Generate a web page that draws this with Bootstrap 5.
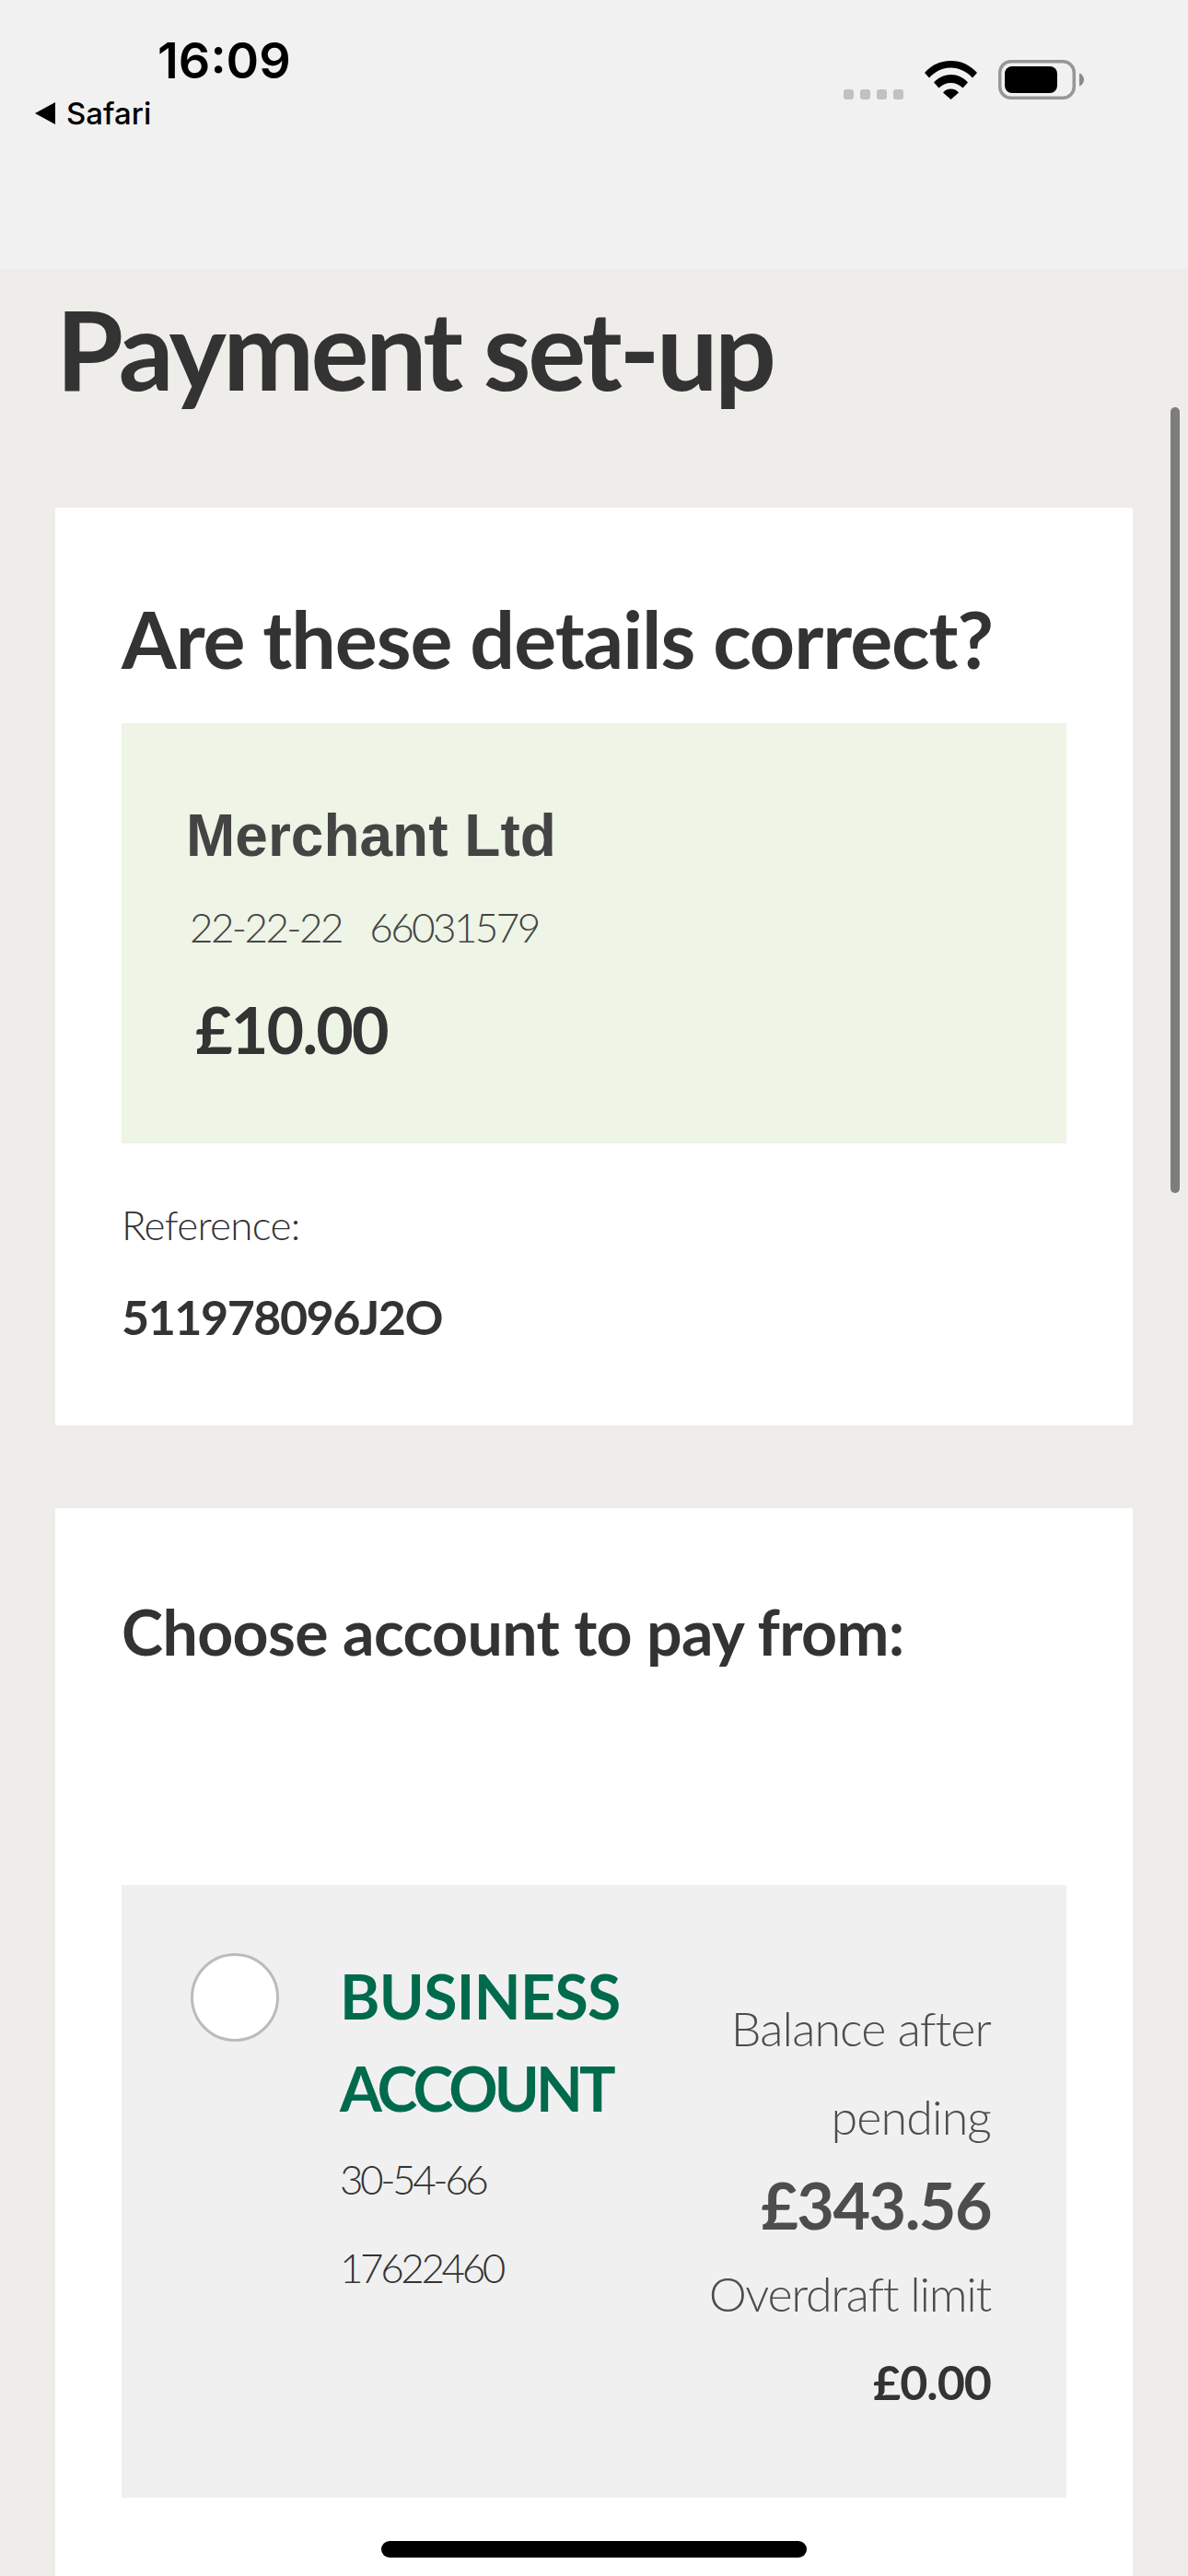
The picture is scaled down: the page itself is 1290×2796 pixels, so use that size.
<!DOCTYPE html>
<html lang="en">
<head>
    <meta charset="UTF-8">
    <meta name="viewport" content="width=device-width, initial-scale=1.0">
    <title>Payment set-up</title>
    <link href="https://cdn.jsdelivr.net/npm/bootstrap@5.3.2/dist/css/bootstrap.min.css" rel="stylesheet">
    <style>
        html, body { height: 100%; }
        body { background: #eeede9; color: #333; font-family: "Lato", "Liberation Sans", sans-serif; overflow: hidden; }
        .phone { position: relative; height: 2796px; overflow: hidden; }

        /* status bar */
        .status-bar { height: 292px; background: #f1f1f1; padding: 31px 113px 0 38px; font-family: "Inter", "Liberation Sans", sans-serif; color: #000; }
        .clock { font-size: 54px; font-weight: 600; line-height: 70px; margin-left: 133px; }
        .back-app { font-size: 33px; line-height: 40px; font-weight: 500; display: flex; align-items: center; gap: 12px; margin-top: 2px; }
        .back-arrow { width: 0; height: 0; border-top: 12px solid transparent; border-bottom: 12px solid transparent; border-right: 22px solid #000; }
        .status-icons { padding-top: 34px; gap: 23px; }

        /* page */
        .page-title { font-size: 118px; font-weight: 700; line-height: 130px; letter-spacing: -3.5px; margin: 0; padding: 22px 0 0 61px; height: 259px; color: #333; }
        .panel { background: #fff; margin: 0 60px; padding: 0 72px; }
        .panel-details { height: 996px; margin-bottom: 90px; padding-top: 92px; }
        .panel-accounts { height: 1200px; padding-top: 94px; }
        .panel-heading { font-size: 86px; font-weight: 700; line-height: 100px; letter-spacing: -1px; margin: 0 0 42px; color: #333; }
        .payee-box { background: #eef4e6; height: 456px; padding: 84px 70px 0; }
        .payee-name { font-family: "Liberation Sans", Arial, sans-serif; font-weight: 700; font-size: 64px; line-height: 76px; color: #444; }
        .payee-nums { font-size: 44px; font-weight: 300; line-height: 60px; margin: 31px 0 0 4px; color: #444; word-spacing: 21px; letter-spacing: -2.6px; }
        .payee-amount { font-size: 70px; font-weight: 700; line-height: 80px; margin: 41px 0 0 10px; letter-spacing: -1.8px; color: #333; }
        .ref-label { font-size: 44px; font-weight: 300; line-height: 60px; margin-top: 58px; letter-spacing: -.7px; }
        .ref-value { font-size: 52px; font-weight: 700; line-height: 60px; margin-top: 40px; letter-spacing: -1.5px; }
        .choose-heading { font-size: 68px; font-weight: 700; line-height: 80px; letter-spacing: -.6px; margin: 0 0 235px; color: #333; }

        /* account option */
        .account-box { background: #f0f0f0; height: 665px; padding: 74px 82px 0 75px; }
        .radio-dot { width: 96px; height: 96px; border-radius: 50%; background: #fff; border: 3px solid #bbb; flex-shrink: 0; margin-right: 66px; }
        .account-name { font-size: 66px; font-weight: 700; line-height: 100px; color: #006a4d; margin-top: -3px; }
        .account-name span { display: block; letter-spacing: -.6px; }
        .account-name span + span { letter-spacing: -3.8px; }
        .account-num { font-size: 44px; font-weight: 300; line-height: 96px; letter-spacing: -3.4px; color: #333; }
        .balance-col { text-align: right; margin-top: 33px; width: 340px; flex-shrink: 0; }
        .bal-label { font-size: 52px; font-weight: 300; line-height: 96px; letter-spacing: -.9px; color: #4d4d4d; }
        .bal-label + .bal-big + .bal-label { letter-spacing: -1.3px; }
        .bal-big { font-size: 70px; font-weight: 700; line-height: 96px; letter-spacing: -1.5px; color: #4d4d4d; }
        .bal-small { font-size: 52px; font-weight: 700; line-height: 96px; letter-spacing: -1px; color: #333; }

        /* overlays */
        .scroll-thumb { position: absolute; left: 1271px; top: 442px; width: 10px; height: 853px; border-radius: 5px; background: #7d7d7d; }
        .home-bar { position: absolute; left: 414px; top: 2758px; width: 462px; height: 18px; border-radius: 9px; background: #000; }
    </style>
</head>
<body>
    <div class="phone">
        <!-- Status bar -->
        <div class="status-bar d-flex justify-content-between align-items-start">
            <div>
                <div class="clock">16:09</div>
                <div class="back-app"><span class="back-arrow"></span>Safari</div>
            </div>
            <div class="status-icons d-flex align-items-end">
                <svg width="65" height="11" viewBox="0 0 65 11"><g fill="#c1c1c1"><rect x="0" y="0" width="11" height="11" rx="3"/><rect x="18" y="0" width="11" height="11" rx="3"/><rect x="36" y="0" width="11" height="11" rx="3"/><rect x="54" y="0" width="11" height="11" rx="3"/></g></svg>
                <svg width="57" height="42" viewBox="0 0 57 42"><path fill="#000" d="M28.5 0C17.5 0 7.500 4.500 0 13l5 5.500C11.500 11.500 19.500 7.500 28.500 7.500S45.500 11.500 52 18.500L57 13C49.500 4.500 39.500 0 28.500 0zM10 23.500l5.500 6c3.500-3.500 8-5.500 13-5.500s9.500 2 13 5.500l5.500-6c-5-5.500-11-8.500-18.500-8.500S15 18 10 23.500zM20 34.500L28.500 42 37 34.500c-2-2.500-5-4-8.500-4s-6.500 1.500-8.500 4z"/></svg>
                <svg width="93" height="43" viewBox="0 0 93 43"><rect x="1.750" y="1.750" width="80.500" height="39.500" rx="12" fill="none" stroke="#979797" stroke-width="3.500"/><rect x="7" y="7" width="57" height="29" rx="8" fill="#000"/><path fill="#8a8a8a" d="M88 14.500c3 1 5 4 5 7s-2 6-5 7z"/></svg>
            </div>
        </div>

        <h1 class="page-title">Payment set-up</h1>

        <!-- Payment details -->
        <div class="panel panel-details">
            <h2 class="panel-heading">Are these details correct?</h2>
            <div class="payee-box">
                <div class="payee-name">Merchant Ltd</div>
                <div class="payee-nums">22-22-22 66031579</div>
                <div class="payee-amount">£10.00</div>
            </div>
            <div class="ref-label">Reference:</div>
            <div class="ref-value">511978096J2O</div>
        </div>

        <!-- Account choice -->
        <div class="panel panel-accounts">
            <h3 class="choose-heading">Choose account to pay from:</h3>
            <div class="account-box d-flex">
                <div class="radio-dot"></div>
                <div class="flex-grow-1">
                    <div class="account-name"><span>BUSINESS</span><span>ACCOUNT</span></div>
                    <div class="account-num">30-54-66</div>
                    <div class="account-num">17622460</div>
                </div>
                <div class="balance-col">
                    <div class="bal-label">Balance after pending</div>
                    <div class="bal-big">£343.56</div>
                    <div class="bal-label">Overdraft limit</div>
                    <div class="bal-small">£0.00</div>
                </div>
            </div>
        </div>

        <div class="scroll-thumb"></div>
        <div class="home-bar"></div>
    </div>
    <script src="https://cdn.jsdelivr.net/npm/bootstrap@5.3.2/dist/js/bootstrap.bundle.min.js"></script>
</body>
</html>
